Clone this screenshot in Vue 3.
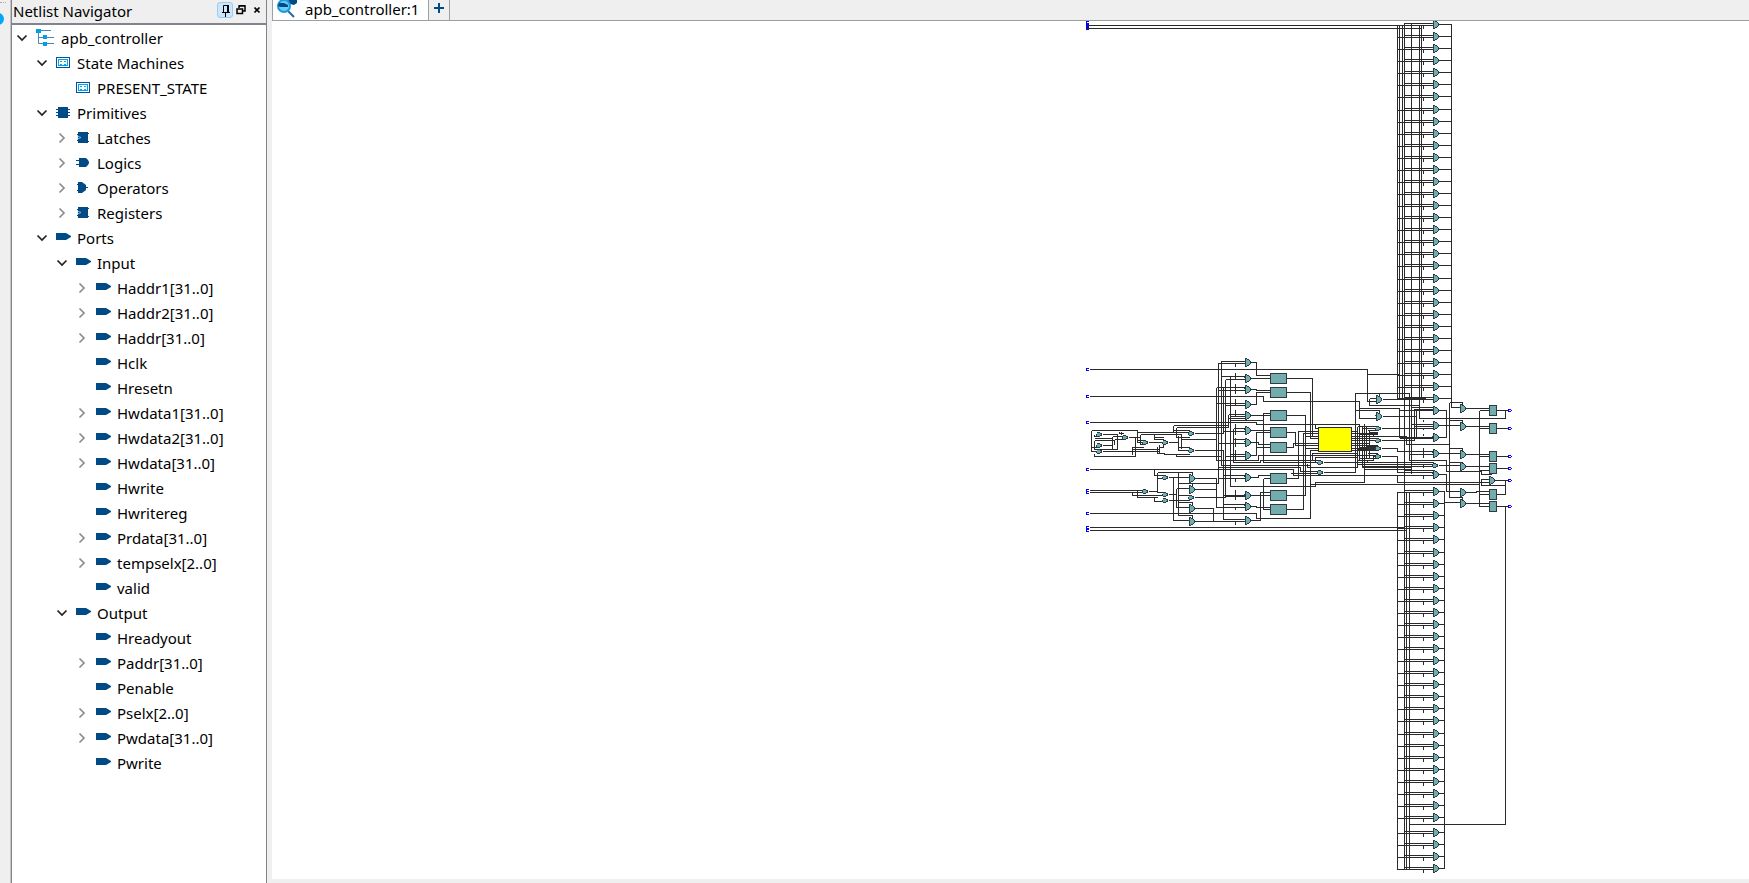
<script setup>
const tree = [
  { level: 0, arrow: 'open', icon: 'root', label: 'apb_controller' },
  { level: 1, arrow: 'open', icon: 'state', label: 'State Machines' },
  { level: 2, arrow: '', icon: 'state', label: 'PRESENT_STATE' },
  { level: 1, arrow: 'open', icon: 'chip', label: 'Primitives' },
  { level: 2, arrow: 'closed', icon: 'latch', label: 'Latches' },
  { level: 2, arrow: 'closed', icon: 'logic', label: 'Logics' },
  { level: 2, arrow: 'closed', icon: 'operator', label: 'Operators' },
  { level: 2, arrow: 'closed', icon: 'latch', label: 'Registers' },
  { level: 1, arrow: 'open', icon: 'port', label: 'Ports' },
  { level: 2, arrow: 'open', icon: 'port', label: 'Input' },
  { level: 3, arrow: 'closed', icon: 'port', label: 'Haddr1[31..0]' },
  { level: 3, arrow: 'closed', icon: 'port', label: 'Haddr2[31..0]' },
  { level: 3, arrow: 'closed', icon: 'port', label: 'Haddr[31..0]' },
  { level: 3, arrow: '', icon: 'port', label: 'Hclk' },
  { level: 3, arrow: '', icon: 'port', label: 'Hresetn' },
  { level: 3, arrow: 'closed', icon: 'port', label: 'Hwdata1[31..0]' },
  { level: 3, arrow: 'closed', icon: 'port', label: 'Hwdata2[31..0]' },
  { level: 3, arrow: 'closed', icon: 'port', label: 'Hwdata[31..0]' },
  { level: 3, arrow: '', icon: 'port', label: 'Hwrite' },
  { level: 3, arrow: '', icon: 'port', label: 'Hwritereg' },
  { level: 3, arrow: 'closed', icon: 'port', label: 'Prdata[31..0]' },
  { level: 3, arrow: 'closed', icon: 'port', label: 'tempselx[2..0]' },
  { level: 3, arrow: '', icon: 'port', label: 'valid' },
  { level: 2, arrow: 'open', icon: 'port', label: 'Output' },
  { level: 3, arrow: '', icon: 'port', label: 'Hreadyout' },
  { level: 3, arrow: 'closed', icon: 'port', label: 'Paddr[31..0]' },
  { level: 3, arrow: '', icon: 'port', label: 'Penable' },
  { level: 3, arrow: 'closed', icon: 'port', label: 'Pselx[2..0]' },
  { level: 3, arrow: 'closed', icon: 'port', label: 'Pwdata[31..0]' },
  { level: 3, arrow: '', icon: 'port', label: 'Pwrite' },
]

// every coordinate is snapped to a pixel centre so the wires stay crisp.
const LEFT = [1070, 340]
const RIGHT = [1290, 340]
const snap = (v, o) => Math.floor(v / 3) + o
function route(src, [ox, oy]) {
  return src.replace(/([MLHV])\s*(\d+)(?:\s+(\d+))?/g, (_, c, a, b) => {
    if (c === 'H') return `H${snap(+a, ox) + 0.5}`
    if (c === 'V') return `V${snap(+a, oy) + 0.5}`
    return `${c}${snap(+a, ox) + 0.5} ${snap(+b, oy) + 0.5}`
  })
}

const leftWires = route(`
M57 88 H720 M57 169 H580 V184 H720 M57 247 H560 V253 H720
M57 388 H670 V405 H720 M57 451 H218 M57 457 H218
M57 520 H560 V535 H720 M57 562 H720 M57 571 H720
M187 457 V466 H280 M202 451 V472 H262 M253 472 V484 H280
M253 388 V406 H280 M262 397 V457 H280 M262 397 H367 V404 M262 415 H280 M234 454 H262
M64 271 V334 H84 M64 271 H202 V307 H220 M73 289 H84 M73 283 V289 M73 295 H127 M73 301 V328 H142 V283 M73 301 H133 M64 322 H84 M73 340 V349 H196 V289
M96 283 H142 M96 316 H127 M96 334 H268 M127 289 V328 M127 289 H160 M133 298 V313 M133 298 H160 M148 274 V280 H160 M154 274 V283
M174 292 H211 M196 292 V325 M187 319 V343 M187 322 H220 M187 328 H265 M202 277 H360 M211 283 V313 H220 M211 283 H334 V325 M202 301 H220
M234 307 H280 M253 280 V298 H280 M253 292 H280 M262 319 V340 H283 V343 H358 M268 313 V340 M268 322 H280 V313
M294 307 H325 M310 256 V277 M310 256 H475 M319 262 V292 H358 M319 262 H475 M310 271 H358 M325 286 V331 M334 298 H439 M325 322 H358
M319 340 V349 H454 M325 331 H358 M334 283 V322
M372 280 H460 M372 331 H460 V538 H526 M439 298 V142
M445 430 V70 H526 M454 61 V376 H720 M454 64 H526 M439 142 H526 M439 361 V142 M439 190 H526 M460 142 V280 M466 118 V472 M466 118 H526
M454 109 H526 M481 109 V439 M445 151 H526 M466 196 H526 M475 223 V262 M475 223 H526 M481 229 H526 M475 235 H526 M481 241 H580
M490 265 V367 H572 V361 H720 M490 265 H526 M460 274 H526 M490 298 H526 M445 310 H526 M481 343 H526 M466 349 H526 M439 361 H565 V346 H720
M542 67 H560 V106 H600 M542 115 H600 M542 148 H560 V151 H600 M542 193 H560 V157 H600 M542 226 H600 M580 217 V367 H720 M580 220 H600
M542 271 H600 M542 307 H565 V313 H600 M542 346 H560 V277 H600 M560 322 H600
M445 382 H690 V393 H720 M460 406 H526 M445 415 H526 M542 412 H565 V406 H600 M481 439 H720
M460 466 H526 M466 460 V469 H526 M460 493 H526 M439 502 H526 M542 466 H600 M542 499 H560 V502 H600 M542 541 H572 V457 H600 M580 415 V508 H600 M580 415 H600
M374 415 H439 V502 M374 448 H439 M372 472 H466 M374 505 H430 V544 M374 544 H526 M325 430 H445 M367 430 V436
M294 412 H358 M310 412 V541 H358 M294 463 H319 M319 445 V502 H358 M319 445 H358 M294 481 H358 M325 397 V526 H367 V532 M325 487 H367 V493 M325 466 H358
M650 115 H720 M650 157 H720 M650 226 H706 V466 H650 M650 277 H676 V316 H720 M650 322 H670 V310 H720 M650 415 H685 V274 H720 M650 508 H700 V280 H720
M670 400 H720 M706 325 H720 M712 370 V382 H720
M496 70 V79 M496 97 V118 M496 130 V160 M496 175 V196 M496 208 V229 M496 250 V283 M496 292 V319 M496 328 V358 M496 415 V424 M496 448 V478 M496 502 V508 M496 544 V553
`, LEFT)

const rightWires = route(`
M0 88 H232 V184 H260 M232 103 H325 M0 115 H67 V289 H85 M0 157 H61 V295 H85 M0 184 H208 V235 H260 M0 226 H46 V289 M46 289 H85 M0 253 H208 V283 H262
M76 253 V265 H85 M0 277 H16 V316 H85 M0 322 H10 V310 H85 M25 415 V274 H85 M0 415 H25 M40 508 V280 H85 M0 508 H40 M46 466 V325 H85 M0 466 H46 M61 535 V331 H85 M0 535 H61
M0 346 H262 M0 361 H84 M0 367 H84 M67 361 V340 H202 M76 367 V352 H202 M0 376 H52 V382 H202 M0 382 H31 V394 H84 M0 388 H10 V405 H343 M0 400 H84 M0 439 H76 V427 H223 V250 M61 433 H568
M100 367 H430 M100 397 H196 V160 H358 V361 H469 V394 H574 V403 H604 M268 160 V168 M196 211 H268 V220 M238 175 V196 H388 M238 175 H260
M276 178 H340 M276 229 H379 M208 205 H328 V292 H430 M274 265 H430 M274 301 H373 V208 H430 M379 211 V289 M274 325 H322 V334 H430 M274 349 H322 V397 H430
M185 274 H202 M185 280 H262 M185 289 H250 M185 295 H262 M185 301 H262 M185 310 H238 M185 316 H232 M185 325 H262 M185 331 H262
M202 259 V382 M208 253 V361 M217 259 V382 H364 M223 250 V400 M229 256 V355 M238 271 V355 M202 259 H262 M217 265 H262 M232 271 H262 M238 277 H262 M250 283 V289 H349 V313 H478
M223 316 H262 M202 328 H262 M208 322 H262 M217 331 H262 M229 319 H262 M202 361 H250 V349 H262 M208 355 H256 M232 340 H262 M232 361 V367 M202 373 H430 M223 388 H364 M217 379 H430
M322 178 V0 M328 178 V0 M337 178 V0 M364 0 V400 M388 0 V235 H646 V211 M394 0 V175 M322 175 H406 V178 H430 M343 172 H406 M358 184 V160
M328 211 H430 M364 202 H430 M364 253 H430 M373 259 H430 M328 295 H430 M358 343 H430 M343 406 H430 M322 403 V427 H598 M343 391 H430
M446 211 H469 V292 M446 256 H512 M446 292 H469 M446 340 H512 M444 376 H512 M446 403 H469 V454 H512 M446 454 H463 V600
M484 187 V0 M478 187 V472 H518 V478 M478 187 H518 V193 M484 187 V202 H512 M478 241 H518 V247 M478 325 H518 V331 M478 367 H518
M463 487 H512 M526 205 H598 M526 259 H598 M526 343 H598 M526 379 H598 M526 457 H560 V454 H598 M526 490 H598
M568 211 V499 H598 M568 211 H598 M568 265 H598 M568 349 H598 M568 391 H598 M568 463 H598 M574 415 V436 H646 M574 418 H598 M574 427 H598
M620 211 H655 M620 265 H655 M620 349 H655 M620 385 H655 M612 421 H655 M646 421 V463 H620 M620 499 H655
M400 238 V244 M400 262 V268 M400 280 V286 M400 322 V352 M400 370 V382 M400 406 V415
M0 562 H343 M0 571 H349 M646 499 V600
`, RIGHT)

const columnWires = `
M1087 25.5H1421 M1087 28.5H1421
M1397.5 25V399 M1399.5 25V399 M1402.5 25V399 M1404.5 23V869 M1411.5 23V472 M1419.5 25V418 M1421.5 25V398
M1404 23.5H1433 M1451.5 24V404
M1397.5 492V869 M1406.5 492V869 M1409.5 492V869 M1444.5 491V869 M1409 824.5H1505.5V507`

const upperRows = [24, 36, 48, 60, 72, 84, 96, 109, 121, 133, 145, 157, 169, 181, 193, 205, 217, 229, 241, 253, 265, 278, 290, 302, 314, 326, 338, 350, 362, 374, 386, 398]
const lowerRows = [491, 503, 515, 527, 539, 552, 564, 576, 588, 600, 612, 624, 636, 648, 660, 672, 684, 696, 708, 720, 733, 745, 757, 769, 781, 793, 805, 817, 832, 844, 856, 868]
const rows = [
  ...upperRows.map((y) => ({ y, end: 1451 })),
  ...lowerRows.map((y) => ({ y, end: 1444 })),
]
const rowWires = rows
  .map(({ y, end }) => `M1404 ${y - 0.5}H1433 M1397 ${y + 1.5}H1433 M1423.5 ${y + 2}V${y + 5} M1439 ${y + 0.5}H${end}`)
  .join('')

const place = (list, [ox, oy]) => list.map(([x, y]) => ({ x: snap(x, ox), y: snap(y, oy) }))
const bigGates = [
  ...rows.map(({ y }) => ({ x: 1433, y })),
  ...place([[526, 67], [526, 115], [526, 148], [526, 193], [526, 226], [526, 271], [526, 307], [526, 346], [526, 412], [526, 466], [526, 499], [526, 541], [358, 415], [358, 448], [358, 505], [358, 544]], LEFT),
  ...place([[260, 178], [260, 229], [430, 211], [430, 256], [430, 292], [430, 340], [430, 403], [511, 205], [511, 259], [511, 343], [511, 379], [511, 457], [511, 490], [598, 421]], RIGHT),
]
const smallGates = [
  ...place([[82, 283], [82, 316], [82, 334], [160, 292], [220, 307], [280, 307], [358, 280], [358, 331], [280, 412], [280, 463], [280, 481], [220, 454], [358, 472]], LEFT),
  ...place([[260, 265], [260, 301], [260, 325], [260, 349], [86, 367], [86, 397], [430, 376]], RIGHT),
]
const blocks = place([[600, 99], [600, 141], [600, 210], [600, 261], [600, 306], [600, 399], [600, 450], [600, 492]], LEFT)
const registers = place([[598, 195], [598, 249], [598, 333], [598, 369], [598, 447], [598, 483]], RIGHT)
const inPorts = [
  { x: 1086, y: 22 }, { x: 1086, y: 25 }, { x: 1086, y: 28 },
  ...place([[48, 88], [48, 169], [48, 247], [48, 388], [48, 451], [48, 457], [48, 520], [48, 562], [48, 571]], LEFT),
]
const outPorts = place([[655, 211], [655, 265], [655, 349], [655, 385], [655, 421], [655, 499]], RIGHT)
</script>

<template>
  <div class="app">
    <div class="dock-edge">
      <span class="grip"></span>
      <span class="knob"></span>
    </div>

    <aside class="navigator">
      <header class="nav-head">
        <h1>Netlist Navigator</h1>
        <button type="button" class="tool pinned" aria-label="Pin panel">
          <svg width="14" height="14" viewBox="0 0 14 14"><path d="M5.500 9V2.500H10.500V9M4 9.500H12M7.500 10V14" fill="none" stroke="#000" /><path d="M9 2H11V9H9Z" /></svg>
        </button>
        <button type="button" class="tool" aria-label="Float panel">
          <svg width="10" height="10" viewBox="0 0 10 10"><path d="M3 3V1H9V6H7M3 .5H9.500M1 4H6.500V8.500H1ZM.5 4H7" fill="none" stroke="#000" stroke-width="1.500" /></svg>
        </button>
        <button type="button" class="tool" aria-label="Close panel">
          <svg width="8" height="8" viewBox="0 0 8 8"><path d="M1.500 1.500L6.500 6.500M6.500 1.500L1.500 6.500" stroke="#000" stroke-width="1.700" /></svg>
        </button>
      </header>

      <ul class="tree">
        <li v-for="n in tree" :key="n.label" :class="['node', 'level-' + n.level]">
          <button v-if="n.arrow" type="button" class="arrow" :aria-expanded="n.arrow === 'open'" :aria-label="'Toggle ' + n.label">
            <svg width="12" height="12" viewBox="0 0 12 12">
              <path v-if="n.arrow === 'open'" d="M1.500 3.500L6 8L10.500 3.500" fill="none" stroke="#222" stroke-width="1.700" />
              <path v-else d="M3.500 1.500L8 6L3.500 10.500" fill="none" stroke="#8c8c8c" stroke-width="1.700" />
            </svg>
          </button>
          <span v-else class="arrow"></span>

          <svg v-if="n.icon === 'root'" class="icon root" width="18" height="18" viewBox="0 0 18 18">
            <path d="M5 2.500H15M2.500 4V15.500H8M2.500 9.500H8M11 9.500H18M11 15.500H18" fill="none" stroke="#4a86b8" />
            <path d="M0 1H5V5H0ZM7 7H11V11H7ZM7 14H11V18H7Z" fill="#00a0e8" />
          </svg>
          <svg v-else-if="n.icon === 'state'" class="icon" width="14" height="12" viewBox="0 0 14 12">
            <rect x=".5" y=".5" width="13" height="10" fill="#fff" stroke="#0050a0" />
            <rect x="2.500" y="2.500" width="9" height="6" :fill="n.level === 1 ? '#fdf7dc' : '#fff'" stroke="#00a3ef" />
            <path d="M4 4.500H6M4 7.500H6M8 4.500H10M8 7.500H10" stroke="#00a3ef" />
          </svg>
          <svg v-else-if="n.icon === 'chip'" class="icon" width="14" height="12" viewBox="0 0 14 12">
            <path d="M2 0H12V11H2ZM0 2H14V3H0ZM0 5H14V6H0ZM0 8H14V9H0Z" fill="#004a86" />
          </svg>
          <svg v-else-if="n.icon === 'latch'" class="icon" width="14" height="12" viewBox="0 0 14 12">
            <path d="M2 0H12V1H13V2H12V9H13V10H12V11H2V9H1V8H2V3H1V2H2Z" fill="#004a86" />
            <path d="M1.500 4L5 5.500L1.500 7" fill="none" stroke="#8fb0cb" />
          </svg>
          <svg v-else-if="n.icon === 'logic'" class="icon" width="14" height="12" viewBox="0 0 14 12">
            <path d="M3 1H10L12 3L13 5V6L12 8L10 10H3V8H0V7H3V4H0V3H3Z" fill="#004a86" />
          </svg>
          <svg v-else-if="n.icon === 'operator'" class="icon" width="14" height="12" viewBox="0 0 14 12">
            <path d="M2 0H6L10 3V5H12V6H10V8L6 11H2V9H1V8H2V3H1V2H2Z" fill="#004a86" />
          </svg>
          <svg v-else class="icon" width="15" height="12" viewBox="0 0 15 12">
            <path d="M0 1H10L15 4V5L10 8H0Z" fill="#004a86" />
          </svg>

          <span class="label">{{ n.label }}</span>
        </li>
      </ul>
    </aside>

    <main class="workspace">
      <nav class="tabs">
        <button type="button" class="tab">
          <svg width="22" height="20" viewBox="0 0 22 20">
            <path d="M12 0H21V3L18 5L14 4Z" fill="#004a86" />
            <path d="M12 11L18 17" stroke="#1f6aa5" stroke-width="2" />
            <circle cx="8" cy="6" r="6" fill="#6fcbf5" stroke="#1a9ae0" stroke-width="2" />
            <path d="M3 3H8L12 5V7H4L2 6Z" fill="#004a86" />
          </svg>
          <span>apb_controller:1</span>
        </button>
        <button type="button" class="add" aria-label="New tab">
          <svg width="10" height="10" viewBox="0 0 10 10"><path d="M5 0V10M0 5H10" stroke="#004a86" stroke-width="2" /></svg>
        </button>
      </nav>

      <div class="canvas">
        <svg class="schematic" role="img" aria-label="apb_controller netlist">
          <defs>
            <g id="gate-big">
              <path d="M0 -4H2V-3H4V-2H5V-1H6V2H5V3H4V4H2V5H0Z" fill="#2d3c40" />
              <path d="M1 -3H2V-2H4V-1H5V2H4V3H2V4H1Z" fill="#73acac" />
              <path d="M-1 -1H0V0H-1ZM5 0H6V1H5Z" fill="#004a86" />
            </g>
            <g id="gate-small">
              <path d="M0 -2H3V-1H5V2H3V3H0Z" fill="#2d3c40" />
              <path d="M0 -1H3V0H4V1H3V2H0Z" fill="#73acac" />
              <path d="M-1 0H0V2H-1Z" fill="#004a86" />
            </g>
          </defs>
          <g transform="translate(-272 -21)" shape-rendering="crispEdges">
            <path class="wire" :d="columnWires" />
            <path class="wire" :d="rowWires" />
            <path class="wire" :d="leftWires" />
            <path class="wire" :d="rightWires" />
            <rect x="1367" y="447" width="9" height="4" fill="#2e2e2e" />
            <use v-for="(g, i) in bigGates" :key="'b' + i" href="#gate-big" :x="g.x" :y="g.y" />
            <use v-for="(g, i) in smallGates" :key="'s' + i" href="#gate-small" :x="g.x" :y="g.y" />
            <rect v-for="(b, i) in blocks" :key="'k' + i" class="cell" :x="b.x + 0.5" :y="b.y + 0.5" width="16" height="10" />
            <rect v-for="(r, i) in registers" :key="'r' + i" class="cell" :x="r.x + 0.5" :y="r.y + 0.5" width="7" height="10" />
            <rect class="machine" x="1318.500" y="427.500" width="33" height="24" />
            <path v-for="(p, i) in inPorts" :key="'i' + i" class="port" :d="`M${p.x} ${p.y - 1}h3v1h-2v1h2v1h-3Z`" />
            <path v-for="(p, i) in outPorts" :key="'o' + i" class="port" :d="`M${p.x} ${p.y - 1}h3v1h1v1h-1v1h-3Zm1 1v1h2v-1Z`" />
          </g>
        </svg>
      </div>
    </main>
  </div>
</template>

<style>
body {
  margin: 0;
  background: #efefef;
}
</style>

<style scoped>
.app {
  display: flex;
  height: 100vh;
  overflow: hidden;
  font-family: "Noto Sans", "Open Sans", sans-serif;
  font-size: 15px;
  color: #000;
}
button {
  margin: 0;
  padding: 0;
  border: 0;
  background: none;
  font: inherit;
  color: inherit;
}
.dock-edge {
  box-sizing: border-box;
  flex: 0 0 11px;
  border-right: 1px solid #c4c4c6;
  overflow: hidden;
}
.grip {
  display: block;
  height: 3px;
  width: 6px;
  border-bottom: 1px dotted #aaa;
  box-sizing: border-box;
}
.knob {
  display: block;
  width: 12px;
  height: 12px;
  margin: 10px 0 0 -8px;
  border-radius: 50%;
  background: #00a8f3;
}
.navigator {
  box-sizing: border-box;
  flex: 0 0 256px;
  display: flex;
  flex-direction: column;
  border-left: 1px solid #83838d;
  border-right: 1px solid #83838d;
  background: #fff;
}
.nav-head {
  box-sizing: border-box;
  display: flex;
  align-items: center;
  height: 25px;
  padding: 0 1px 4px 1px;
  border-bottom: 2px solid #83838d;
  background: #efefef;
}
h1 {
  flex: 1;
  margin: 2px 0 0;
  font-size: 15px;
  font-weight: 400;
  line-height: 20px;
}
.tool {
  display: grid;
  place-items: center;
  width: 16px;
  height: 16px;
}
.tool.pinned {
  border: 1px solid #99ccf3;
  border-radius: 3px;
  background: #cce6fb;
  box-sizing: border-box;
}
.tree {
  margin: 0;
  padding: 0;
  list-style: none;
}
.node {
  display: flex;
  align-items: center;
  height: 25px;
}
.level-1 { padding-left: 20px; }
.level-2 { padding-left: 40px; }
.level-3 { padding-left: 60px; }
.arrow {
  display: grid;
  place-items: center;
  flex: 0 0 20px;
  height: 25px;
}
.icon { margin: 1px 0 0 4px; }
.icon.root { margin: 0 0 1px 4px; }
.label {
  margin: 2px 0 0 7px;
  line-height: 25px;
  white-space: nowrap;
}
.icon[width="15"] + .label { margin-left: 6px; }
.workspace {
  flex: 1;
  min-width: 0;
  display: flex;
  flex-direction: column;
  padding: 0 0 4px 5px;
}
.tabs {
  box-sizing: border-box;
  display: flex;
  height: 21px;
  border-bottom: 1px solid #a0a0a0;
}
.tab {
  display: flex;
  align-items: center;
  gap: 7px;
  padding: 0 9px 0 3px;
  border-left: 1px solid #a0a0a0;
  border-right: 1px solid #a0a0a0;
  background: #fff;
  line-height: 18px;
}
.tab span { margin-bottom: 2px; }
.add {
  display: grid;
  place-items: center;
  width: 21px;
  padding-bottom: 4px;
  border-right: 1px solid #a0a0a0;
}
.canvas {
  flex: 1;
  min-height: 0;
  background: #fff;
  overflow: hidden;
}
.schematic {
  display: block;
  width: 100%;
  height: 100%;
}
.wire {
  fill: none;
  stroke: #2a2a2a;
}
.cell {
  fill: #73acac;
  stroke: #2d3c40;
}
.machine {
  fill: #ffff00;
  stroke: #2a2a2a;
}
.port {
  fill: #0000f5;
  fill-rule: evenodd;
}
</style>
